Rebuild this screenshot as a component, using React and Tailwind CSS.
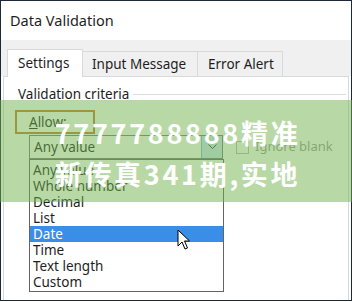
import React from "react";

const items = ["Any value", "Whole number", "Decimal", "List", "Date", "Time", "Text length", "Custom"];

export default function App() {
  return (
    <div className="w-[352px] h-[302px] bg-white relative overflow-hidden font-['Noto_Sans',sans-serif] text-[#1e1e1e]">
      <div className="h-[301px] border border-[#1d2838] flex flex-col">
        {/* Title */}
        <div className="h-[39px] flex items-center pl-[9px] text-[14.5px] shrink-0">Data Validation</div>
        {/* Tab strip */}
        <div className="h-[36px] bg-[#f0f0f0] flex items-end pl-[6px] shrink-0 text-[13.5px]">
          <div className="relative z-10 h-[28px] -mb-px w-[76px] bg-white border-t border-l border-r border-[#d9d9d9] pl-[10px] flex items-center">Settings</div>
          <div className="h-[25px] w-[115px] border-t border-r border-[#d9d9d9] pl-[9px] flex items-center">Input Message</div>
          <div className="h-[25px] w-[85px] border-t border-r border-[#d9d9d9] pl-[10px] flex items-center">Error Alert</div>
        </div>
        {/* Panel */}
        <div className="flex-1 mx-[2px] border-l border-r border-t border-[#d9d9d9] flex flex-col text-[13.5px]">
          <div className="flex items-center pl-[14px] pt-[8px] h-[26px]">
            <span>Validation criteria</span>
            <div className="flex-1 h-px bg-[#dcdcdc] ml-[4px] mr-[2px]" />
          </div>
          <div className="mt-[7px] ml-[11px] w-[80px] h-[24px] border-2 border-[#c47a2c] pl-[12px] flex items-center">
            <span><span className="underline">A</span>llow:</span>
          </div>
          <div className="flex items-center ml-[25px] mt-px h-[24px]">
            <div className="w-[194px] h-[24px] border border-[#7a7a7a] flex items-center bg-white">
              <span className="pl-[4px] flex-1">Any value</span>
              <div className="w-[21px] h-full bg-[#cce4f7] border-l border-[#7eb4ea] flex items-center justify-center">
                <svg width="9" height="6" viewBox="0 0 9 6"><path d="M0.5 0.5 L4.5 4.5 L8.5 0.5" fill="none" stroke="#404040" strokeWidth="1" /></svg>
              </div>
            </div>
            <div className="ml-[13px] w-[13px] h-[13px] border border-[#b8b8b8] bg-white" />
            <span className="ml-[6px] text-[13px] text-[#9a9a9a]">Ignore blank</span>
          </div>
          <div className="ml-[25px] w-[195px] border border-[#646464] pt-[2px] pb-px bg-white">
            {items.map((t) => (
              <div key={t} className={"h-[16px] leading-[16px] pl-[3px] " + (t === "Date" ? "bg-[#3a8ee8] text-white" : "")}>{t}</div>
            ))}
          </div>
        </div>
      </div>

      {/* Cursor */}
      <svg className="absolute left-[177px] top-[229px]" width="14" height="22" viewBox="0 0 14 22">
        <path d="M1 1 L1 17 L5 13 L8 20 L10.5 19 L7.5 12 L12.5 12 Z" fill="white" stroke="black" strokeWidth="1" strokeLinejoin="round" />
      </svg>

      {/* Overlay band */}
      <div className="absolute left-0 right-0 top-[100px] h-[102px] bg-[#72b44e]/50 flex flex-col items-center justify-center pt-[4px] pl-[3px] text-white font-bold text-[27px] leading-[41px] tracking-[2.7px] font-['Noto_Sans_CJK_SC',sans-serif]">
        <div>7777788888精准</div>
        <div>新传真341期,实地</div>
      </div>
    </div>
  );
}
